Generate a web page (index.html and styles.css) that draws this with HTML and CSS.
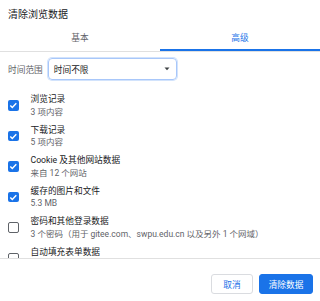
FILE: index.html
```html
<!DOCTYPE html>
<html lang="zh-CN">
<head>
<meta charset="utf-8">
<link rel="stylesheet" href="styles.css">
</head>
<body>
<div class="dialog">
  <div class="title">清除浏览数据</div>
  <div class="tabs">
    <div class="tab">基本</div>
    <div class="tab active">高级</div>
  </div>
  <div class="body">
    <div class="range">
      <span class="range-label">时间范围</span>
      <div class="select">
        <span>时间不限</span>
        <svg class="caret" width="6" height="4" viewBox="0 0 6 4"><path d="M0.5 0.5h5L3 3.3z" fill="#3c4043"/></svg>
      </div>
    </div>
    <div class="item">
      <span class="cb on"><svg viewBox="0 0 10 10"><path d="M2.2 5.2l1.9 1.9 3.8-4" fill="none" stroke="#fff" stroke-width="1.4"/></svg></span>
      <div class="txt"><div class="p">浏览记录</div><div class="s">3 项内容</div></div>
    </div>
    <div class="item">
      <span class="cb on"><svg viewBox="0 0 10 10"><path d="M2.2 5.2l1.9 1.9 3.8-4" fill="none" stroke="#fff" stroke-width="1.4"/></svg></span>
      <div class="txt"><div class="p">下载记录</div><div class="s">5 项内容</div></div>
    </div>
    <div class="item">
      <span class="cb on"><svg viewBox="0 0 10 10"><path d="M2.2 5.2l1.9 1.9 3.8-4" fill="none" stroke="#fff" stroke-width="1.4"/></svg></span>
      <div class="txt"><div class="p">Cookie 及其他网站数据</div><div class="s">来自 12 个网站</div></div>
    </div>
    <div class="item">
      <span class="cb on"><svg viewBox="0 0 10 10"><path d="M2.2 5.2l1.9 1.9 3.8-4" fill="none" stroke="#fff" stroke-width="1.4"/></svg></span>
      <div class="txt"><div class="p">缓存的图片和文件</div><div class="s">5.3 MB</div></div>
    </div>
    <div class="item">
      <span class="cb"></span>
      <div class="txt"><div class="p">密码和其他登录数据</div><div class="s">3 个密码（用于 gitee.com、swpu.edu.cn 以及另外 1 个网域）</div></div>
    </div>
    <div class="item">
      <span class="cb"></span>
      <div class="txt"><div class="p">自动填充表单数据</div><div class="s">&nbsp;</div></div>
    </div>
  </div>
  <div class="footer">
    <button class="btn cancel">取消</button>
    <button class="btn primary">清除数据</button>
  </div>
</div>
</body>
</html>
```

FILE: styles.css
```css
* { box-sizing: border-box; }
html, body {
  margin: 0;
  padding: 0;
  background: #fff;
}
body {
  font-family: Roboto, "Noto Sans CJK SC", sans-serif;
  color: #202124;
  width: 320px;
  height: 301px;
  overflow: hidden;
}
.dialog {
  display: flex;
  flex-direction: column;
  height: 301px;
}
.title {
  font-size: 10px;
  line-height: 12px;
  padding: 9px 8px 7px;
  color: #202124;
}
.tabs {
  display: flex;
  border-bottom: 1px solid #e0e0e0;
  height: 24px;
}
.tab {
  flex: 1;
  text-align: center;
  font-size: 8.7px;
  line-height: 12px;
  padding-top: 4px;
  color: #5f6368;
}
.tab.active {
  color: #1a73e8;
  box-shadow: inset 0 -2px 0 #1a73e8;
}
.body {
  height: 207px;
  overflow-y: scroll;
  border-bottom: 1px solid #e0e0e0;
}
.body::-webkit-scrollbar {
  width: 6px;
}
.body::-webkit-scrollbar-track {
  background: #f1f1f1;
}
.body::-webkit-scrollbar-thumb {
  background: #c1c1c1;
}
.body::-webkit-scrollbar-button:single-button {
  display: block;
  height: 7px;
  background-color: #f1f1f1;
  background-repeat: no-repeat;
  background-position: center;
}
.body::-webkit-scrollbar-button:single-button:vertical:decrement {
  background-image: url("data:image/svg+xml,%3Csvg xmlns='http://www.w3.org/2000/svg' width='6' height='6'%3E%3Cpath d='M1 4h4L3 2z' fill='%23505050'/%3E%3C/svg%3E");
}
.body::-webkit-scrollbar-button:single-button:vertical:increment {
  background-image: url("data:image/svg+xml,%3Csvg xmlns='http://www.w3.org/2000/svg' width='6' height='6'%3E%3Cpath d='M1 2h4L3 4z' fill='%23505050'/%3E%3C/svg%3E");
}
.range {
  display: flex;
  align-items: center;
  gap: 5px;
  padding: 6px 8px 0;
  margin-bottom: 10px;
}
.range-label {
  font-size: 8.7px;
  color: #5f6368;
}
.select {
  width: 129px;
  height: 22px;
  border: 1px solid #a8c7fa;
  box-shadow: 0 0 0 1px #d2e3fc;
  border-radius: 4px;
  display: flex;
  align-items: center;
  justify-content: space-between;
  padding: 0 5px 0 5px;
  font-size: 8.7px;
  color: #202124;
}
.caret {
  display: block;
  margin-right: 1px;
}
.item {
  display: flex;
  align-items: center;
  padding: 3px 0 3px 8px;
  gap: 12px;
}
.item:last-child {
  margin-bottom: 62px;
}
.cb {
  width: 10.5px;
  height: 10.5px;
  border: 1.6px solid #5f6368;
  border-radius: 2px;
  flex: none;
  display: flex;
}
.cb.on {
  background: #1a73e8;
  border-color: #1a73e8;
  border-width: 0;
}
.cb svg {
  width: 100%;
  height: 100%;
}
.txt .p {
  font-size: 8.7px;
  line-height: 12.6px;
  color: #202124;
  white-space: nowrap;
}
.txt .s {
  font-size: 8.5px;
  line-height: 12px;
  color: #5f6368;
  white-space: nowrap;
}
.footer {
  display: flex;
  justify-content: flex-end;
  gap: 6px;
  padding: 15px 7px 0 0;
}
.btn {
  height: 20px;
  border-radius: 3px;
  font-family: Roboto, "Noto Sans CJK SC", sans-serif;
  font-size: 8.7px;
  padding: 0;
  cursor: pointer;
}
.cancel {
  width: 42px;
  background: #fff;
  border: 1px solid #dadce0;
  color: #1a73e8;
}
.primary {
  width: 54px;
  background: #1a73e8;
  border: 1px solid #1a73e8;
  color: #fff;
}
```
